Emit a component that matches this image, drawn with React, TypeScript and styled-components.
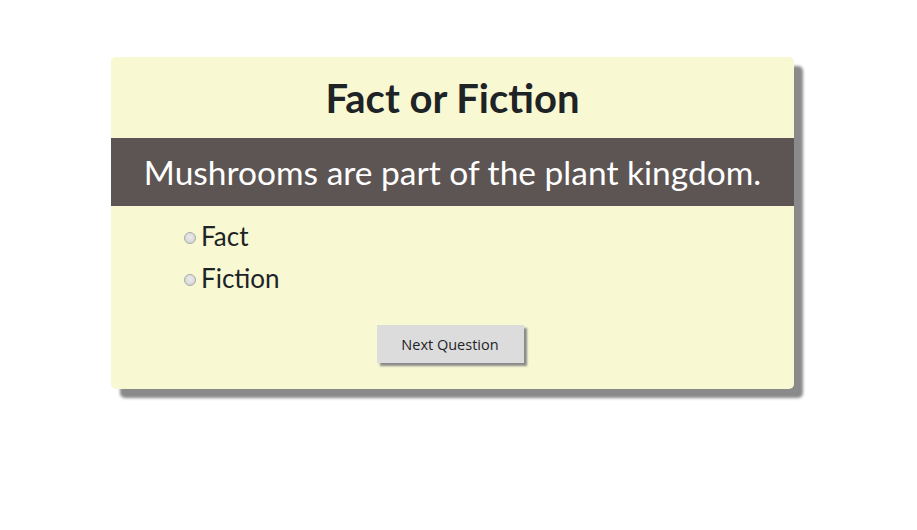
import React, { useState } from 'react';
import styled, { createGlobalStyle } from 'styled-components';

const colors = {
	card: '#f8f8d3',
	band: '#5d5553',
	ink: '#1e2326',
	shadow: '#8a8a8a',
	button: '#dcdcdc',
};

const GlobalStyle = createGlobalStyle`
	body {
		margin: 0;
		background: #fff;
		font-family: Lato, 'Open Sans', sans-serif;
	}
`;

const Page = styled.main`
	padding: 57px 0 40px 111px;
`;

const Card = styled.section`
	width: 683px;
	height: 332px;
	box-sizing: border-box;
	background: ${colors.card};
	border-radius: 5px;
	box-shadow: 9px 9px 3px ${colors.shadow};
	display: flex;
	flex-direction: column;
`;

const Title = styled.h1`
	margin: 0;
	height: 81px;
	display: flex;
	align-items: center;
	justify-content: center;
	font-size: 40px;
	font-weight: 700;
	color: ${colors.ink};
	box-sizing: border-box;
`;

const Statement = styled.div`
	height: 68px;
	background: ${colors.band};
	color: #fff;
	display: flex;
	align-items: center;
	justify-content: center;
	font-size: 33.5px;
	font-weight: 400;
`;

const Options = styled.ul`
	list-style: none;
	margin: 0;
	padding: 14px 0 0 73px;
	display: flex;
	flex-direction: column;
	gap: 10px;
`;

const Option = styled.label`
	display: flex;
	align-items: center;
	gap: 5px;
	font-size: 26px;
	color: ${colors.ink};
	line-height: 32px;
	cursor: pointer;
`;

const Radio = styled.input.attrs({ type: 'radio' })`
	appearance: none;
	margin: 3px 0 0;
	width: 12px;
	height: 12px;
	border-radius: 50%;
	border: 1px solid #a9a9a9;
	background: radial-gradient(circle at 50% 40%, #ececec, #cfcfcf);
	box-sizing: border-box;

	&:checked {
		background: radial-gradient(circle, #444 0 3px, #e4e4e4 3.5px);
	}
`;

const Footer = styled.div`
	display: flex;
	justify-content: center;
	padding-top: 31px;
`;

const NextButton = styled.button`
	width: 147px;
	height: 38px;
	margin-right: 5px;
	border: none;
	background: ${colors.button};
	box-shadow: 3px 3px 2px ${colors.shadow};
	font-family: 'Open Sans', sans-serif;
	font-size: 14.5px;
	color: ${colors.ink};
	cursor: pointer;
`;

const App = () => {
	const [answer, setAnswer] = useState('');

	return (
		<Page>
			<GlobalStyle />
			<Card>
				<Title>Fact or Fiction</Title>
				<Statement>Mushrooms are part of the plant kingdom.</Statement>
				<Options>
					{['Fact', 'Fiction'].map((choice) => (
						<li key={choice}>
							<Option>
								<Radio
									name='answer'
									checked={answer === choice}
									onChange={() => setAnswer(choice)}
								/>
								{choice}
							</Option>
						</li>
					))}
				</Options>
				<Footer>
					<NextButton type='button'>Next Question</NextButton>
				</Footer>
			</Card>
		</Page>
	);
};

export default App;
